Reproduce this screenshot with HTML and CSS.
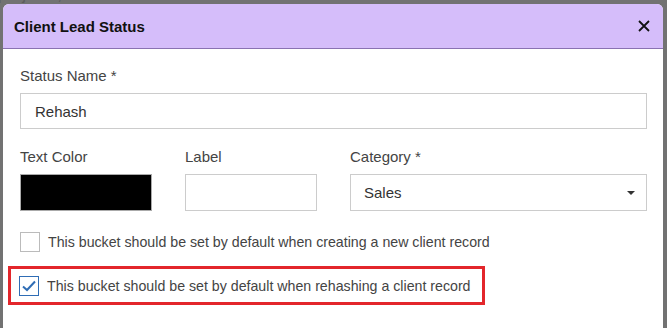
FILE: index.html
```html
<!DOCTYPE html>
<html lang="en">
<head>
  <meta charset="UTF-8" />
  <meta name="viewport" content="width=device-width, initial-scale=1.0"/>
  <title>Client Lead Status</title>
  <link rel="stylesheet" href="styles.css">
</head>
<body>
  <!-- page behind the overlay -->
  <div class="page-behind">clients, projects, and work orders</div>

  <div class="modal">
    <div class="modal-header">
      <h3>Client Lead Status</h3>
      <button class="close-btn" aria-label="Close">
        <svg width="12" height="12" viewBox="0 0 12 12">
          <path d="M1 1 L11 11 M11 1 L1 11" stroke="#111" stroke-width="1.8" fill="none"/>
        </svg>
      </button>
    </div>

    <div class="modal-body">
      <label class="field-label">Status Name *</label>
      <input type="text" class="text-input" value="Rehash" />

      <div class="field-row">
        <div class="field">
          <label class="field-label">Text Color</label>
          <div class="color-box"></div>
        </div>
        <div class="field">
          <label class="field-label">Label</label>
          <input type="text" class="text-input short" />
        </div>
        <div class="field">
          <label class="field-label">Category *</label>
          <div class="select-box">
            <span>Sales</span>
            <span class="caret"></span>
          </div>
        </div>
      </div>

      <div class="check-row">
        <span class="checkbox"></span>
        <span>This bucket should be set by default when creating a new client record</span>
      </div>

      <div class="check-row highlight">
        <span class="checkbox checked">
          <svg width="16" height="14" viewBox="0 0 16 14">
            <path d="M2 7.5 L6 11 L14 2.5" stroke="#2f6db5" stroke-width="2" fill="none"/>
          </svg>
        </span>
        <span>This bucket should be set by default when rehashing a client record</span>
      </div>
    </div>
  </div>
</body>
</html>
```

FILE: styles.css
```css
body {
  margin: 0;
  height: 328px;
  overflow: hidden;
  background: #727272;
  font-family: "Liberation Sans", Arial, sans-serif;
  position: relative;
}

.page-behind {
  position: absolute;
  top: -15px;
  left: -60px;
  font-size: 17px;
  color: #5c5c5c;
}

.modal {
  position: absolute;
  top: 4px;
  left: 3px;
  width: 660px;
  height: 340px;
  background: white;
  border-radius: 6px 6px 0 0;
  overflow: hidden;
}

.modal-header {
  height: 44px;
  background: #d5bdfa;
  border-bottom: 1px solid #8a72b2;
  display: flex;
  align-items: center;
  justify-content: space-between;
  padding: 0 13px 0 11px;
}

.modal-header h3 {
  margin: 0;
  font-size: 15px;
  font-weight: bold;
  color: #111;
  padding-top: 1px;
}

.close-btn {
  background: none;
  border: none;
  padding: 0;
  display: flex;
  cursor: pointer;
}

.modal-body {
  padding: 17px 16px 0 17px;
}

.field-label {
  display: block;
  font-size: 15px;
  line-height: 20px;
  color: #444;
  margin-bottom: 7px;
}

.text-input {
  display: block;
  width: 100%;
  height: 36px;
  box-sizing: border-box;
  border: 1px solid #ccc;
  padding: 0 14px;
  font-family: inherit;
  font-size: 15px;
  color: #333;
  outline: none;
}

.text-input.short {
  height: 37px;
}

.field-row {
  display: grid;
  grid-template-columns: 132px 132px 1fr;
  column-gap: 33px;
  margin-top: 18px;
}

.color-box {
  height: 37px;
  box-sizing: border-box;
  background: black;
  border: 1px solid #aaa;
}

.select-box {
  height: 37px;
  box-sizing: border-box;
  border: 1px solid #ccc;
  display: flex;
  align-items: center;
  justify-content: space-between;
  padding: 0 11px 0 13px;
  font-size: 15px;
  color: #333;
}

.caret {
  width: 0;
  height: 0;
  border-left: 4px solid transparent;
  border-right: 4px solid transparent;
  border-top: 4px solid #333;
}

.check-row {
  display: flex;
  align-items: center;
  gap: 8px;
  font-size: 14.2px;
  color: #444;
  margin-top: 21px;
  height: 20px;
}

.checkbox {
  width: 20px;
  height: 20px;
  box-sizing: border-box;
  border: 1px solid #bbb;
  background: white;
  display: flex;
  align-items: center;
  justify-content: center;
  flex-shrink: 0;
}

.checkbox.checked {
  border-color: #2f6db5;
}

.highlight {
  display: inline-flex;
  height: 33px;
  border: 3px solid #e3262b;
  margin-top: 14px;
  margin-left: -12px;
  padding: 0 11px 0 8px;
}
```
